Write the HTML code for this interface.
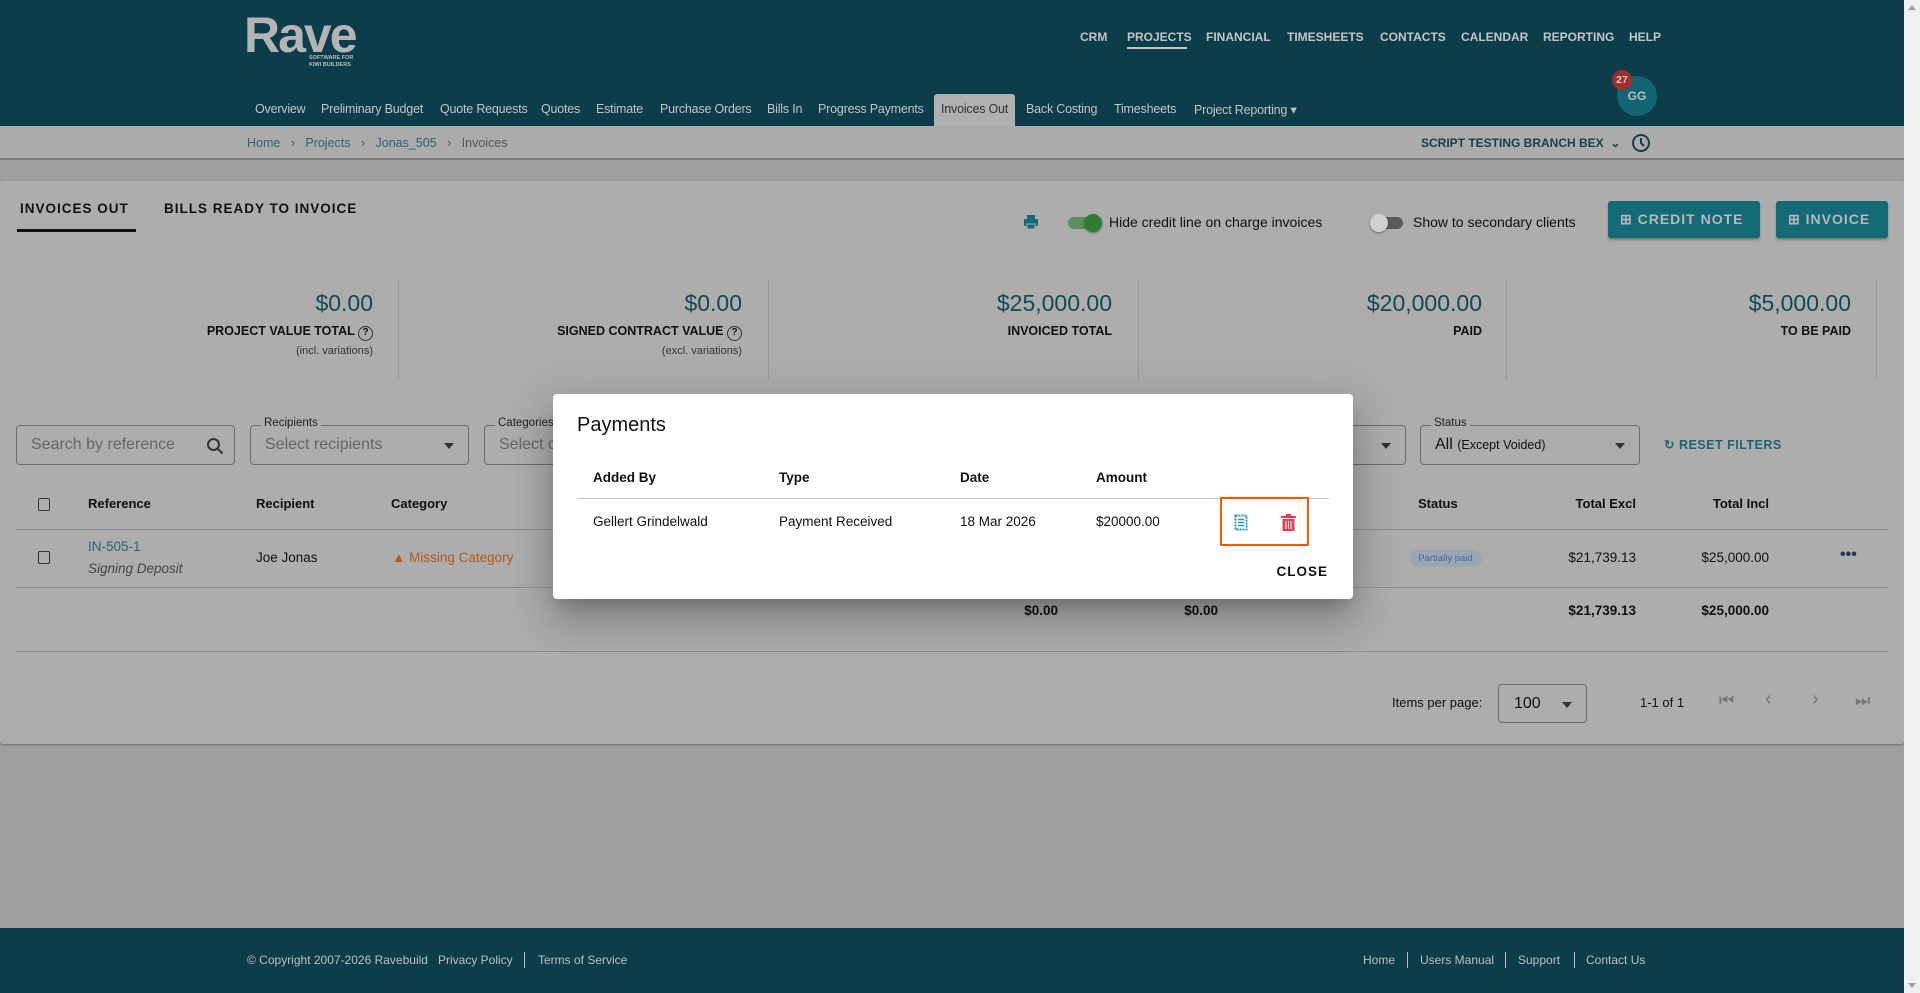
<!DOCTYPE html>
<html><head><meta charset="utf-8"><style>
*{box-sizing:border-box;margin:0;padding:0}
body{width:1920px;height:993px;overflow:hidden;background:#9e9e9e;font-family:"Liberation Sans",Arial,sans-serif;position:relative;color:#111}
.a{position:absolute;white-space:nowrap}
.hdr{left:0;top:0;width:1904px;height:126px;background:#0b3d4a}
.tn{top:30px;font-size:12px;font-weight:bold;color:#c4c4c4}
.sn{top:102px;font-size:12.5px;color:#c4c4c4;letter-spacing:-0.2px}
.ft{top:953px;font-size:12px;color:#bfbfbf}
.lbl{font-size:12.5px;font-weight:bold;color:#111}
.val{font-size:23px;color:#0f4a56}
.sub{font-size:11px;color:#333}
.field{border:1px solid #6d6d6d;border-radius:4px;height:40px;top:425px}
.flab{position:absolute;top:-9px;left:10px;background:#adadad;padding:0 3px;font-size:11.5px;color:#222}
.ph{position:absolute;left:14px;top:10px;font-size:16px;color:#666}
.arr{position:absolute;right:14px;top:17px;width:0;height:0;border-left:5px solid transparent;border-right:5px solid transparent;border-top:6px solid #333}
.th{top:496px;font-size:13px;font-weight:bold;color:#111}
.hl{left:16px;width:1872px;height:1px;background:#8e8e8e}
.td{font-size:13.5px;color:#111}
.mh{top:470px;font-size:13.5px;font-weight:bold;color:#111}
.md{top:514px;font-size:13.5px;color:#111}
</style></head><body>
<div class="a hdr"></div>
<div class="a" style="left:244px;top:6px;font-size:50px;font-weight:bold;color:#b4b4b4;letter-spacing:-2px">Rave</div>
<div class="a" style="left:309px;top:55px;font-size:5.5px;font-weight:bold;color:#bbb;line-height:7px">SOFTWARE FOR<br>KIWI BUILDERS</div>
<div class="a tn" style="left:1080px">CRM</div>
<div class="a tn" style="left:1127px">PROJECTS</div>
<div class="a" style="left:1127px;top:47px;width:60px;height:2px;background:#c4c4c4"></div>
<div class="a tn" style="left:1206px">FINANCIAL</div>
<div class="a tn" style="left:1287px">TIMESHEETS</div>
<div class="a tn" style="left:1380px">CONTACTS</div>
<div class="a tn" style="left:1461px">CALENDAR</div>
<div class="a tn" style="left:1543px">REPORTING</div>
<div class="a tn" style="left:1629px">HELP</div>
<div class="a" style="left:934px;top:94px;width:81px;height:32px;background:#b0b0b0;border-radius:3px 3px 0 0"></div>
<div class="a sn" style="left:255px">Overview</div>
<div class="a sn" style="left:321px">Preliminary Budget</div>
<div class="a sn" style="left:440px">Quote Requests</div>
<div class="a sn" style="left:541px">Quotes</div>
<div class="a sn" style="left:596px">Estimate</div>
<div class="a sn" style="left:660px">Purchase Orders</div>
<div class="a sn" style="left:767px">Bills In</div>
<div class="a sn" style="left:818px">Progress Payments</div>
<div class="a sn" style="left:941px;color:#333">Invoices Out</div>
<div class="a sn" style="left:1026px">Back Costing</div>
<div class="a sn" style="left:1114px">Timesheets</div>
<div class="a sn" style="left:1194px">Project Reporting ▾</div>
<div class="a" style="left:1617px;top:76px;width:40px;height:40px;border-radius:50%;background:#126674;color:#bbb;font-size:12px;font-weight:bold;text-align:center;line-height:40px">GG</div>
<div class="a" style="left:1612px;top:70px;width:20px;height:20px;border-radius:50%;background:#a32d2c;color:#ccc;font-size:10.5px;font-weight:bold;text-align:center;line-height:20px">27</div>
<!-- breadcrumb -->
<div class="a" style="left:0;top:126px;width:1904px;height:34px;background:#ababab;border-bottom:2px solid #7c7c7c"></div>
<div class="a" style="left:247px;top:136px;font-size:12.5px;color:#2c6470">Home &nbsp;&nbsp;›&nbsp;&nbsp; Projects &nbsp;&nbsp;›&nbsp;&nbsp; Jonas_505 &nbsp;&nbsp;›&nbsp;&nbsp; <span style="color:#555">Invoices</span></div>
<div class="a" style="left:1421px;top:136px;font-size:12px;font-weight:bold;color:#173f4a">SCRIPT TESTING BRANCH BEX &nbsp;⌄</div>
<svg class="a" style="left:1631px;top:133px" width="20" height="20" viewBox="0 0 20 20"><circle cx="10" cy="10" r="8" fill="none" stroke="#173f4a" stroke-width="2"/><path d="M10 5v5l3 3" stroke="#173f4a" stroke-width="2" fill="none"/></svg>
<!-- card -->
<div class="a" style="left:0;top:181px;width:1904px;height:563px;background:#adadad;border-radius:3px;box-shadow:0 1px 2px rgba(0,0,0,.3)"></div>
<div class="a" style="left:20px;top:201px;font-size:13.5px;font-weight:bold;letter-spacing:1px;color:#111">INVOICES OUT</div>
<div class="a" style="left:17px;top:229px;width:119px;height:3px;background:#111"></div>
<div class="a" style="left:164px;top:201px;font-size:13.5px;font-weight:bold;letter-spacing:1px;color:#111">BILLS READY TO INVOICE</div>
<svg class="a" style="left:1023px;top:214px" width="16" height="16" viewBox="0 0 16 16"><rect x="4" y="1" width="8" height="4" fill="#166a77"/><rect x="1" y="5" width="14" height="7" rx="1" fill="#166a77"/><rect x="4" y="10" width="8" height="5" fill="#166a77" stroke="#adadad" stroke-width="1"/></svg>
<div class="a" style="left:1068px;top:217px;width:30px;height:12px;border-radius:6px;background:#5d8e5f"></div>
<div class="a" style="left:1084px;top:214px;width:18px;height:18px;border-radius:50%;background:#2f7d32;box-shadow:0 1px 2px rgba(0,0,0,.4)"></div>
<div class="a" style="left:1109px;top:214px;font-size:14px;color:#111">Hide credit line on charge invoices</div>
<div class="a" style="left:1373px;top:217px;width:30px;height:12px;border-radius:6px;background:#5a5a5a"></div>
<div class="a" style="left:1370px;top:214px;width:18px;height:18px;border-radius:50%;background:#d0d0d0;box-shadow:0 1px 2px rgba(0,0,0,.4)"></div>
<div class="a" style="left:1413px;top:214px;font-size:14px;color:#111">Show to secondary clients</div>
<div class="a" style="left:1608px;top:201px;width:152px;height:37px;background:#146a77;border-radius:3px;box-shadow:0 2px 2px rgba(0,0,0,.3);color:#b8b8b8;font-size:14px;font-weight:bold;letter-spacing:1px;line-height:37px;padding-left:12px">⊞ CREDIT NOTE</div>
<div class="a" style="left:1776px;top:201px;width:112px;height:37px;background:#146a77;border-radius:3px;box-shadow:0 2px 2px rgba(0,0,0,.3);color:#b8b8b8;font-size:14px;font-weight:bold;letter-spacing:1px;line-height:37px;padding-left:12px">⊞ INVOICE</div>
<!-- stats -->
<div class="a" style="left:398px;top:279px;width:1px;height:101px;background:#999"></div>
<div class="a" style="left:768px;top:279px;width:1px;height:101px;background:#999"></div>
<div class="a" style="left:1138px;top:279px;width:1px;height:101px;background:#999"></div>
<div class="a" style="left:1506px;top:279px;width:1px;height:101px;background:#999"></div>
<div class="a" style="left:1876px;top:279px;width:1px;height:101px;background:#999"></div>
<div class="a val" style="right:1547px;top:290px">$0.00</div>
<div class="a lbl" style="right:1547px;top:324px">PROJECT VALUE TOTAL <span style="display:inline-block;width:15px;height:15px;border:1.5px solid #333;border-radius:50%;font-size:10px;text-align:center;line-height:12px">?</span></div>
<div class="a sub" style="right:1547px;top:345px">(incl. variations)</div>
<div class="a val" style="right:1178px;top:290px">$0.00</div>
<div class="a lbl" style="right:1178px;top:324px">SIGNED CONTRACT VALUE <span style="display:inline-block;width:15px;height:15px;border:1.5px solid #333;border-radius:50%;font-size:10px;text-align:center;line-height:12px">?</span></div>
<div class="a sub" style="right:1178px;top:345px">(excl. variations)</div>
<div class="a val" style="right:808px;top:290px">$25,000.00</div>
<div class="a lbl" style="right:808px;top:324px">INVOICED TOTAL</div>
<div class="a val" style="right:438px;top:290px">$20,000.00</div>
<div class="a lbl" style="right:438px;top:324px">PAID</div>
<div class="a val" style="right:69px;top:290px">$5,000.00</div>
<div class="a lbl" style="right:69px;top:324px">TO BE PAID</div>
<!-- filters -->
<div class="a field" style="left:16px;width:219px"><div class="ph">Search by reference</div><svg style="position:absolute;right:10px;top:11px" width="18" height="18" viewBox="0 0 18 18"><circle cx="7.5" cy="7.5" r="5.5" fill="none" stroke="#333" stroke-width="2"/><path d="M11.5 11.5l5 5" stroke="#333" stroke-width="2"/></svg></div>
<div class="a field" style="left:250px;width:219px"><div class="flab">Recipients</div><div class="ph">Select recipients</div><div class="arr"></div></div>
<div class="a field" style="left:484px;width:922px"><div class="flab">Categories</div><div class="ph">Select c</div><div class="arr"></div></div>
<div class="a field" style="left:1420px;width:220px"><div class="flab">Status</div><div class="ph" style="color:#111">All <span style="font-size:12.5px">(Except Voided)</span></div><div class="arr"></div></div>
<div class="a" style="left:1664px;top:437px;font-size:12.5px;font-weight:bold;letter-spacing:.5px;color:#1d6470">↻ RESET FILTERS</div>
<!-- table -->
<div class="a" style="left:38px;top:498px;width:12px;height:13px;border:1.5px solid #333;border-radius:2px"></div>
<div class="a th" style="left:88px">Reference</div>
<div class="a th" style="left:256px">Recipient</div>
<div class="a th" style="left:391px">Category</div>
<div class="a th" style="left:1418px">Status</div>
<div class="a th" style="right:284px">Total Excl</div>
<div class="a th" style="right:151px">Total Incl</div>
<div class="a hl" style="top:529px"></div>
<div class="a" style="left:38px;top:551px;width:12px;height:13px;border:1.5px solid #333;border-radius:2px"></div>
<div class="a td" style="left:88px;top:539px;color:#1f6874">IN-505-1</div>
<div class="a td" style="left:88px;top:561px;font-style:italic;color:#444">Signing Deposit</div>
<div class="a td" style="left:256px;top:550px">Joe Jonas</div>
<div class="a td" style="left:392px;top:550px;color:#b55a14">▲ Missing Category</div>
<div class="a" style="left:1409px;top:550px;width:73px;height:17px;border-radius:9px;background:#9aa7b3;color:#3a6b9b;font-size:9.5px;text-align:center;line-height:17px">Partially paid</div>
<div class="a td" style="right:284px;top:550px">$21,739.13</div>
<div class="a td" style="right:151px;top:550px">$25,000.00</div>
<div class="a" style="left:1840px;top:546px;font-size:16px;font-weight:bold;color:#123f5a">•••</div>
<div class="a hl" style="top:587px"></div>
<div class="a td" style="right:862px;top:603px;font-weight:bold">$0.00</div>
<div class="a td" style="right:702px;top:603px;font-weight:bold">$0.00</div>
<div class="a td" style="right:284px;top:603px;font-weight:bold">$21,739.13</div>
<div class="a td" style="right:151px;top:603px;font-weight:bold">$25,000.00</div>
<div class="a hl" style="top:651px"></div>
<div class="a" style="left:1392px;top:695px;font-size:13px;color:#111">Items per page:</div>
<div class="a" style="left:1498px;top:684px;width:89px;height:39px;border:1px solid #6d6d6d;border-radius:4px"><div style="position:absolute;left:15px;top:10px;font-size:16px;color:#111">100</div><div class="arr"></div></div>
<div class="a" style="left:1640px;top:695px;font-size:13px;color:#111">1-1 of 1</div>
<div class="a" style="left:1719px;top:691px;font-size:17px;color:#777">⏮</div>
<div class="a" style="left:1765px;top:688px;font-size:20px;color:#777">‹</div>
<div class="a" style="left:1812px;top:688px;font-size:20px;color:#777">›</div>
<div class="a" style="left:1855px;top:691px;font-size:17px;color:#777">⏭</div>
<!-- footer -->
<div class="a" style="left:0;top:928px;width:1904px;height:65px;background:#0b3d4a"></div>
<div class="a ft" style="left:247px">© Copyright 2007-2026 Ravebuild</div>
<div class="a ft" style="left:438px">Privacy Policy</div>
<div class="a" style="left:524px;top:952px;width:1px;height:16px;background:#bbb"></div>
<div class="a ft" style="left:538px">Terms of Service</div>
<div class="a ft" style="left:1363px">Home</div>
<div class="a" style="left:1407px;top:952px;width:1px;height:16px;background:#bbb"></div>
<div class="a ft" style="left:1420px">Users Manual</div>
<div class="a" style="left:1505px;top:952px;width:1px;height:16px;background:#bbb"></div>
<div class="a ft" style="left:1518px">Support</div>
<div class="a" style="left:1574px;top:952px;width:1px;height:16px;background:#bbb"></div>
<div class="a ft" style="left:1586px">Contact Us</div>
<!-- scrollbar -->
<div class="a" style="left:1904px;top:0;width:16px;height:993px;background:#f1f1f1"></div>
<div class="a" style="left:1908px;top:5px;width:0;height:0;border-left:4px solid transparent;border-right:4px solid transparent;border-bottom:5px solid #a3a3a3"></div>
<div class="a" style="left:1908px;top:983px;width:0;height:0;border-left:4px solid transparent;border-right:4px solid transparent;border-top:5px solid #a3a3a3"></div>
<!-- modal -->
<div class="a" style="left:553px;top:394px;width:800px;height:205px;background:#fff;border-radius:4px;box-shadow:0 11px 15px -7px rgba(0,0,0,.2),0 24px 38px 3px rgba(0,0,0,.14),0 9px 46px 8px rgba(0,0,0,.12)"></div>
<div class="a" style="left:577px;top:414px;font-size:20px;font-weight:500;color:#111">Payments</div>
<div class="a mh" style="left:593px">Added By</div>
<div class="a mh" style="left:779px">Type</div>
<div class="a mh" style="left:960px">Date</div>
<div class="a mh" style="left:1096px">Amount</div>
<div class="a" style="left:577px;top:498px;width:752px;height:1px;background:#c8c8c8"></div>
<div class="a md" style="left:593px">Gellert Grindelwald</div>
<div class="a md" style="left:779px">Payment Received</div>
<div class="a md" style="left:960px">18 Mar 2026</div>
<div class="a md" style="left:1096px">$20000.00</div>
<div class="a" style="left:1220px;top:497px;width:89px;height:49px;border:2px solid #ff5a00"></div>
<svg class="a" style="left:1234px;top:514px" width="14" height="17" viewBox="0 0 14 17"><path d="M1.5 1.5h11v14h-11z" fill="none" stroke="#2a97a8" stroke-width="2" stroke-dasharray="2 1"/><path d="M4 5.5h6M4 8.5h6M4 11.5h6" stroke="#2a97a8" stroke-width="1.6"/></svg>
<svg class="a" style="left:1281px;top:514px" width="15" height="17" viewBox="0 0 15 17"><rect x="0" y="2" width="15" height="2" fill="#ef3b57"/><rect x="5" y="0" width="5" height="2" fill="#ef3b57"/><path d="M1.5 5h12v12h-12z" fill="#ef3b57"/><path d="M5 7v8M7.5 7v8M10 7v8" stroke="#fff" stroke-width="1"/></svg>
<div class="a" style="right:592px;top:564px;font-size:13.5px;font-weight:bold;letter-spacing:1px;color:#111">CLOSE</div>
</body></html>
